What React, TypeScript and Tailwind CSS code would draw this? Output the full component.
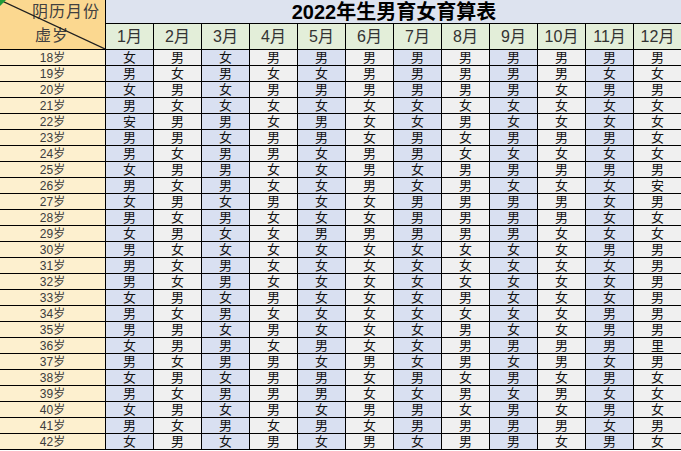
import React from 'react';

const months = ['1月', '2月', '3月', '4月', '5月', '6月', '7月', '8月', '9月', '10月', '11月', '12月'];

// 每行对应虚岁 18 ~ 42，12 个月
const table: string[] = [
  '女男女男男男男男男男男男',
  '男女男女女男男男男男女女',
  '女男女男男男男男男女男男',
  '男女女女女女女女女女女女',
  '安男男女男女女男女女女女',
  '男男女男男女男女男男男女',
  '男女男男女男男女女女女女',
  '女男男女女男女男男男男男',
  '男女男女女男女男女女女安',
  '女男女男女女男男男男女男',
  '男女男女女女男男男男女女',
  '女男女女男男男男男女女女',
  '男女女女女女女女女女男男',
  '男女男女女女女女女女女男',
  '男女男女女女女女女女女男',
  '女男女男女女女男女女女男',
  '男女男女女女女女女女男男',
  '男男女男女女女男女女男男',
  '女男男女男女女男男男男里',
  '男女男男女男女男女男女男',
  '女男女男男女男女男女男女',
  '男女男男男女女男女男女女',
  '女男女男女男男女男女男女',
  '男女男女男女男男男男女男',
  '女男女男女男女男男女男女',
];

const font = { fontFamily: '"Liberation Sans", "Noto Sans CJK SC", sans-serif' };

export default function App() {
  return (
    <div className="w-[681px] h-[451px] overflow-hidden bg-white" style={font}>
      <div className="grid grid-cols-[106px_repeat(12,48px)] grid-rows-[24px_26px_repeat(25,16px)] w-[682px]">
        {/* Corner cell */}
        <div className="relative row-span-2 bg-[#fbd890] border-r border-b border-black flex flex-col text-[16px] leading-[24px] text-[#404040]">
          <svg className="absolute inset-0" width="105" height="49" viewBox="0 0 105 49">
            <line x1="0" y1="0" x2="105" y2="49" stroke="#1f1f1f" strokeWidth="1.2" />
          </svg>
          <div className="absolute left-0 top-0 w-0 h-0 border-t-[6px] border-r-[6px] border-t-[#1f9b3a] border-r-transparent" />
          <span className="self-end pr-[5px] tracking-[1px]">阴历月份</span>
          <span className="pl-[35px] tracking-[1px]">虚岁</span>
        </div>

        {/* Title */}
        <div className="col-span-12 bg-[#dde3ef] border-b border-black flex items-center justify-center text-[20px] font-bold text-black leading-none pt-[1px]">
          2022年生男育女育算表
        </div>

        {/* Month header */}
        {months.map(m => (
          <div
            key={m}
            className="bg-[#e3eed9] border-r border-b border-black flex items-center justify-center text-[16px] text-[#333]"
          >
            {m}
          </div>
        ))}

        {/* Rows */}
        {table.map((row, r) => (
          <React.Fragment key={r}>
            <div className="bg-[#fdf0cf] border-r border-b border-black flex items-center justify-center text-[12px] leading-none text-[#3b3b3b]">
              {r + 18}岁
            </div>
            {row.split('').map((c, i) => (
              <div
                key={i}
                className={
                  'border-r border-b border-black flex items-center justify-center text-[13px] leading-none text-[#111] ' +
                  (i % 2 === 0 ? 'bg-[#d9e0f1]' : 'bg-[#f0f0f0]')
                }
              >
                {c}
              </div>
            ))}
          </React.Fragment>
        ))}
      </div>
    </div>
  );
}
